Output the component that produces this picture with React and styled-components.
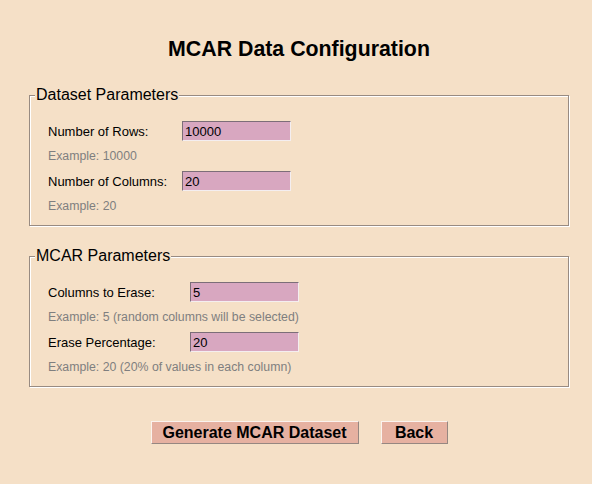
import React from "react";
import styled, { createGlobalStyle } from "styled-components";

const GlobalStyle = createGlobalStyle`
  html, body {
    margin: 0;
    padding: 0;
    background-color: #f5e0c7;
  }

  body {
    font-family: "Liberation Sans", Arial, sans-serif;
  }
`;

const datasetFields = [
  { label: "Number of Rows:", value: "10000", example: "Example: 10000" },
  { label: "Number of Columns:", value: "20", example: "Example: 20" },
];

const mcarFields = [
  {
    label: "Columns to Erase:",
    value: "5",
    example: "Example: 5 (random columns will be selected)",
  },
  {
    label: "Erase Percentage:",
    value: "20",
    example: "Example: 20 (20% of values in each column)",
  },
];

const ParamGroup = ({ title, fields, labelWidth }) => (
  <Group>
    <Legend>{title}</Legend>
    <FieldGrid $labelWidth={labelWidth}>
      {fields.map((f) => (
        <React.Fragment key={f.label}>
          <Label>{f.label}</Label>
          <Entry type="text" defaultValue={f.value} />
          <Example>{f.example}</Example>
        </React.Fragment>
      ))}
    </FieldGrid>
  </Group>
);

const App = () => {
  return (
    <>
      <GlobalStyle />
      <Page>
        <Title>MCAR Data Configuration</Title>
        <ParamGroup
          title="Dataset Parameters"
          fields={datasetFields}
          labelWidth={134}
        />
        <ParamGroup
          title="MCAR Parameters"
          fields={mcarFields}
          labelWidth={142}
        />
        <ButtonRow>
          <ActionButton $w={208}>Generate MCAR Dataset</ActionButton>
          <ActionButton $w={67}>Back</ActionButton>
        </ButtonRow>
      </Page>
    </>
  );
};

export default App;

const Page = styled.div`
  min-height: 484px;
  box-sizing: border-box;
  padding: 37px 23px 0 29px;
  display: flex;
  flex-direction: column;
`;

const Title = styled.h1`
  margin: 0 0 24px;
  font-size: 21.33px;
  line-height: 25px;
  font-weight: bold;
  text-align: center;
  color: #000;
`;

const Group = styled.fieldset`
  margin: 0;
  padding: 17px 0 9px 5px;
  border: 1px solid #988b82;
  box-shadow: inset 1px 1px 0 #ffffff, 1px 1px 0 #ffffff;

  & + & {
    margin-top: 21px;
  }
`;

const Legend = styled.legend`
  padding: 0 1px;
  font-size: 16px;
  line-height: 18px;
  color: #000;
  background-color: #f5e0c7;
`;

const FieldGrid = styled.div`
  display: grid;
  grid-template-columns: ${(p) => p.$labelWidth}px 109px;
  grid-auto-rows: 20px;
  row-gap: 5px;
  padding-left: 13px;
  align-items: center;
`;

const Label = styled.span`
  font-size: 13px;
  color: #000;
`;

const Entry = styled.input`
  box-sizing: border-box;
  width: 109px;
  height: 20px;
  margin: 0;
  padding: 0 2px;
  border: 1px solid;
  border-color: #7c6e78 #f4eef0 #f4eef0 #7c6e78;
  background-color: #d8a7c0;
  font-family: "Liberation Sans", Arial, sans-serif;
  font-size: 13px;
  color: #000;
  outline: none;
`;

const Example = styled.span`
  grid-column: 1 / -1;
  font-size: 12.3px;
  line-height: 20px;
  color: #7f7f7f;
  white-space: nowrap;
`;

const ButtonRow = styled.div`
  margin-top: 34px;
  display: flex;
  justify-content: center;
  gap: 22px;
`;

const ActionButton = styled.button`
  box-sizing: border-box;
  width: ${(p) => p.$w}px;
  height: 23px;
  margin: 0;
  padding: 0;
  border: 1px solid;
  border-color: #fbf3ee #968781 #968781 #fbf3ee;
  background-color: #e6b1a1;
  font-family: "Liberation Sans", Arial, sans-serif;
  font-size: 16px;
  font-weight: bold;
  color: #000;
  cursor: pointer;
`;
